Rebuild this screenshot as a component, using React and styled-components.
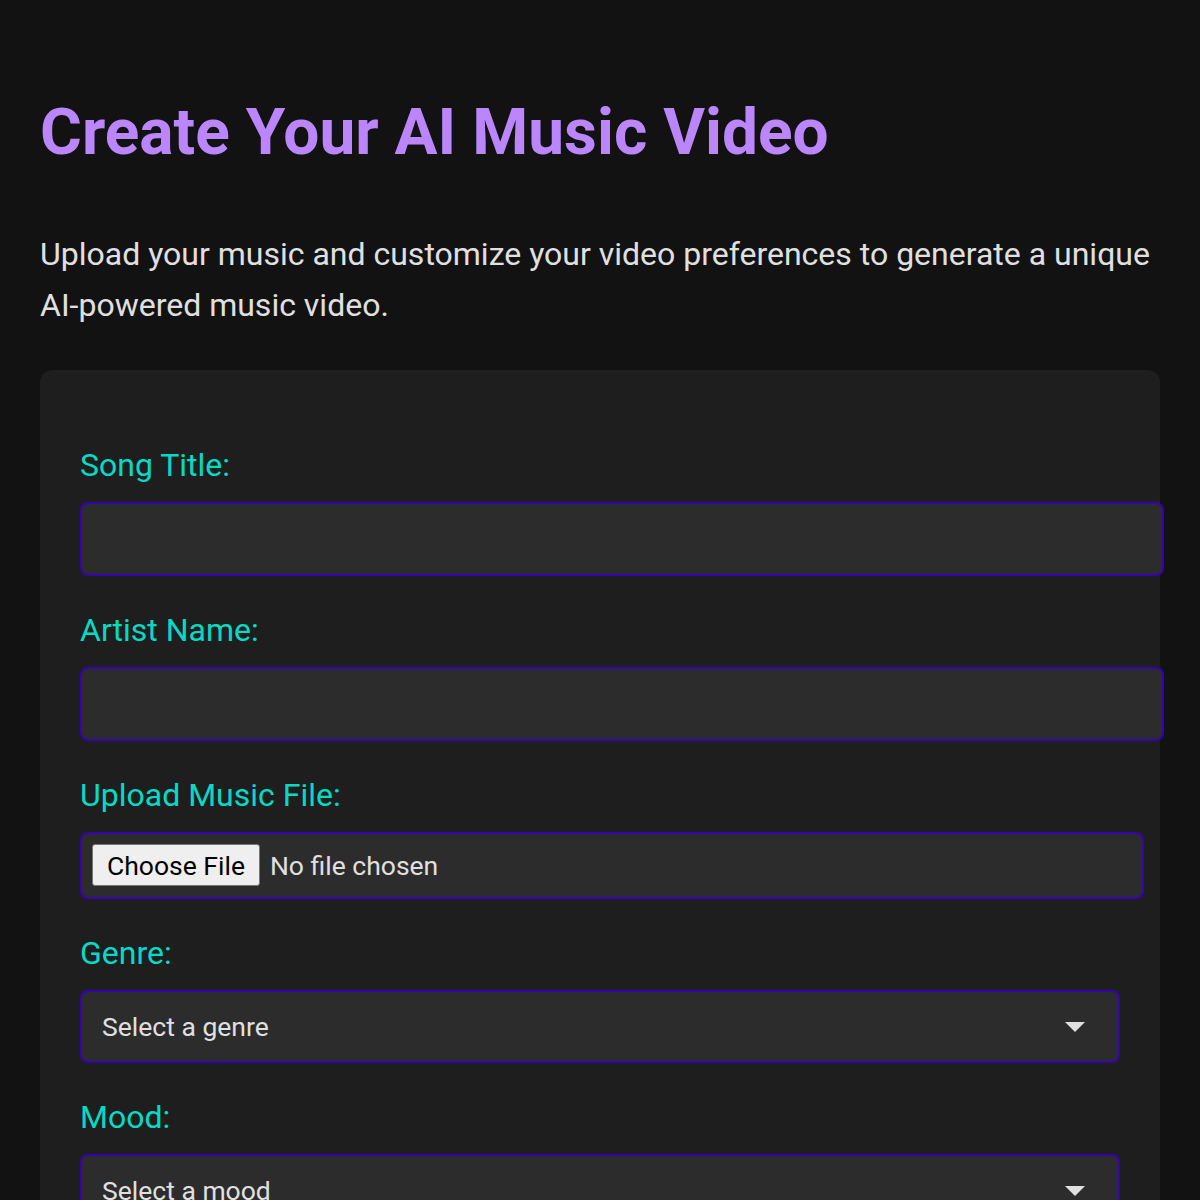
import React from "react";
import styled, { createGlobalStyle } from "styled-components";

const GlobalStyle = createGlobalStyle`
  html, body {
    margin: 0;
    padding: 0;
    background: #121212;
  }
  body {
    font-family: Roboto, "Noto Sans", Arial, sans-serif;
    color: #e0e0e0;
  }
`;

const Page = styled.div`
  padding: 40px 40px 0;
`;

const Title = styled.h1`
  margin: 55px 0 0;
  font-size: 64px;
  font-weight: 700;
  line-height: 1.2;
  color: #bb86fc;
`;

const Intro = styled.p`
  margin: 57px 0 0;
  font-size: 32px;
  line-height: 51px;
  color: #e0e0e0;
`;

const Card = styled.form`
  margin-top: 39px;
  background: #1e1e1e;
  border-radius: 12px;
  padding: 41px 40px 40px;
`;

const Group = styled.div`
  padding-top: 36px;
`;

const Label = styled.label`
  display: block;
  font-size: 32px;
  line-height: 36px;
  color: #03dac6;
  margin-bottom: 19px;
`;

const TextInput = styled.input`
  display: block;
  width: 100%;
  height: 32px;
  padding: 19px 20px;
  font-family: inherit;
  font-size: 26.5px;
  color: #e0e0e0;
  background: #2c2c2c;
  border: 2px solid #3700b3;
  border-radius: 8px;
  outline: none;
`;

const FileInput = styled.input`
  display: block;
  width: 100%;
  padding: 10.5px 10px;
  font-family: inherit;
  font-size: 26.5px;
  color: #e0e0e0;
  background: #2c2c2c;
  border: 2px solid #3700b3;
  border-radius: 8px;

  &::file-selector-button {
    font-family: inherit;
    font-size: 26.5px;
    color: #000;
    background: #efefef;
    border: 1px solid #767676;
    border-radius: 3px;
    padding: 4.5px 14px;
    margin-right: 10px;
  }
`;

const SelectWrap = styled.div`
  position: relative;

  &::after {
    content: "";
    position: absolute;
    right: 35px;
    top: 50%;
    margin-top: -4.5px;
    border-left: 10px solid transparent;
    border-right: 10px solid transparent;
    border-top: 10px solid #e0e0e0;
    pointer-events: none;
  }
`;

const Select = styled.select`
  display: block;
  box-sizing: border-box;
  width: 100%;
  height: 73px;
  appearance: none;
  padding: 0 20px;
  font-family: inherit;
  font-size: 26.5px;
  color: #e0e0e0;
  background: #2c2c2c;
  border: 2px solid #3700b3;
  border-radius: 8px;
  outline: none;
`;

const genres = ["Pop", "Rock", "Hip Hop", "Electronic", "Jazz", "Classical"];
const moods = ["Happy", "Sad", "Energetic", "Calm", "Dark"];

const App = () => {
  return (
    <Page>
      <GlobalStyle />
      <Title>Create Your AI Music Video</Title>
      <Intro>
        Upload your music and customize your video preferences to generate a
        unique AI-powered music video.
      </Intro>
      <Card onSubmit={(e) => e.preventDefault()}>
        <Group>
          <Label htmlFor="title">Song Title:</Label>
          <TextInput id="title" type="text" />
        </Group>
        <Group>
          <Label htmlFor="artist">Artist Name:</Label>
          <TextInput id="artist" type="text" />
        </Group>
        <Group>
          <Label htmlFor="file">Upload Music File:</Label>
          <FileInput id="file" type="file" accept="audio/*" />
        </Group>
        <Group>
          <Label htmlFor="genre">Genre:</Label>
          <SelectWrap>
            <Select id="genre" defaultValue="">
              <option value="">Select a genre</option>
              {genres.map((g) => (
                <option key={g}>{g}</option>
              ))}
            </Select>
          </SelectWrap>
        </Group>
        <Group>
          <Label htmlFor="mood">Mood:</Label>
          <SelectWrap>
            <Select id="mood" defaultValue="">
              <option value="">Select a mood</option>
              {moods.map((m) => (
                <option key={m}>{m}</option>
              ))}
            </Select>
          </SelectWrap>
        </Group>
      </Card>
    </Page>
  );
};

export default App;
